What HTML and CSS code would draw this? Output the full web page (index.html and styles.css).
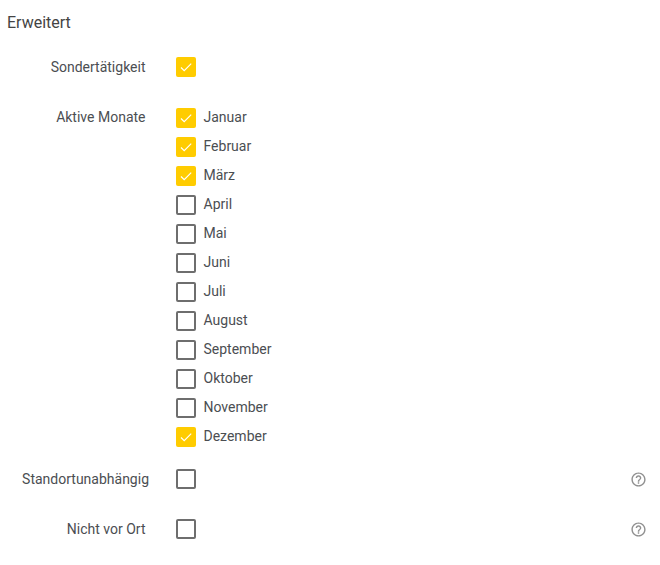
FILE: index.html
```html
<!DOCTYPE html>
<html lang="de">
<head>
<meta charset="utf-8">
<title>Erweitert</title>
<link rel="stylesheet" href="styles.css">
</head>
<body>
<svg class="defs" aria-hidden="true">
  <symbol id="help" viewBox="0 0 24 24"><path d="M11 18h2v-2h-2v2zm1-16C6.480 2 2 6.480 2 12s4.480 10 10 10 10-4.480 10-10S17.520 2 12 2zm0 18c-4.410 0-8-3.590-8-8s3.590-8 8-8 8 3.590 8 8-3.590 8-8 8zm0-14c-2.210 0-4 1.790-4 4h2c0-1.100.9-2 2-2s2 .9 2 2c0 2-3 1.750-3 5h2c0-2.250 3-2.500 3-5 0-2.210-1.790-4-4-4z"/></symbol>
  <symbol id="check" viewBox="0 0 20 20"><path d="M5 10.500 8.200 13.700 15.200 6.700"/></symbol>
</svg>
<main class="form">
  <h1 class="title">Erweitert</h1>
  <div class="row special">
    <span class="label">Sondertätigkeit</span>
    <span class="box checked"><svg><use href="#check"/></svg></span>
  </div>
  <div class="row months">
    <span class="label">Aktive Monate</span>
    <div class="options">
      <label class="option"><span class="box checked"><svg><use href="#check"/></svg></span><span class="text">Januar</span></label>
      <label class="option"><span class="box checked"><svg><use href="#check"/></svg></span><span class="text">Februar</span></label>
      <label class="option"><span class="box checked"><svg><use href="#check"/></svg></span><span class="text">März</span></label>
      <label class="option"><span class="box"></span><span class="text">April</span></label>
      <label class="option"><span class="box"></span><span class="text">Mai</span></label>
      <label class="option"><span class="box"></span><span class="text">Juni</span></label>
      <label class="option"><span class="box"></span><span class="text">Juli</span></label>
      <label class="option"><span class="box"></span><span class="text">August</span></label>
      <label class="option"><span class="box"></span><span class="text">September</span></label>
      <label class="option"><span class="box"></span><span class="text">Oktober</span></label>
      <label class="option"><span class="box"></span><span class="text">November</span></label>
      <label class="option"><span class="box checked"><svg><use href="#check"/></svg></span><span class="text">Dezember</span></label>
    </div>
  </div>
  <div class="row remote">
    <span class="label wide">Standortunabhängig</span>
    <span class="box"></span>
    <svg class="help"><use href="#help"/></svg>
  </div>
  <div class="row offsite">
    <span class="label">Nicht vor Ort</span>
    <span class="box"></span>
    <svg class="help"><use href="#help"/></svg>
  </div>
</main>
</body>
</html>
```

FILE: styles.css
```css
* { box-sizing: border-box; }
body { margin: 0; background: #fff; color: #4b4e52; font: 14px/20px Roboto, sans-serif; }
.defs { display: none; }
.form { padding: 13px 13px 0 7px; }
.title { margin: 0 0 24px; color: #444; font-size: 16px; font-weight: 400; line-height: 20px; }
.row { display: flex; align-items: flex-start; }
.label { width: 138.5px; margin-right: 30.5px; text-align: right; white-space: nowrap; }
.label.wide { width: 142px; margin-right: 27px; }
.special { margin-bottom: 30px; }
.months { margin-bottom: 23px; }
.remote { margin-bottom: 30px; }
.options { display: flex; flex-direction: column; gap: 9px; }
.option { display: flex; height: 20px; }
.text { margin-left: 7.5px; }
.box { display: block; width: 20px; height: 20px; border: 2px solid #6e6e6e; border-radius: 2px; }
.option .box { margin-top: 1px; flex: none; }
.checked { border: 0; background: #ffcc00; }
.checked svg { display: block; width: 20px; height: 20px; fill: none; stroke: #fff; stroke-width: 1.2; }
.help { width: 17px; height: 17px; margin: 2px 0 0 auto; fill: #909090; }
```
